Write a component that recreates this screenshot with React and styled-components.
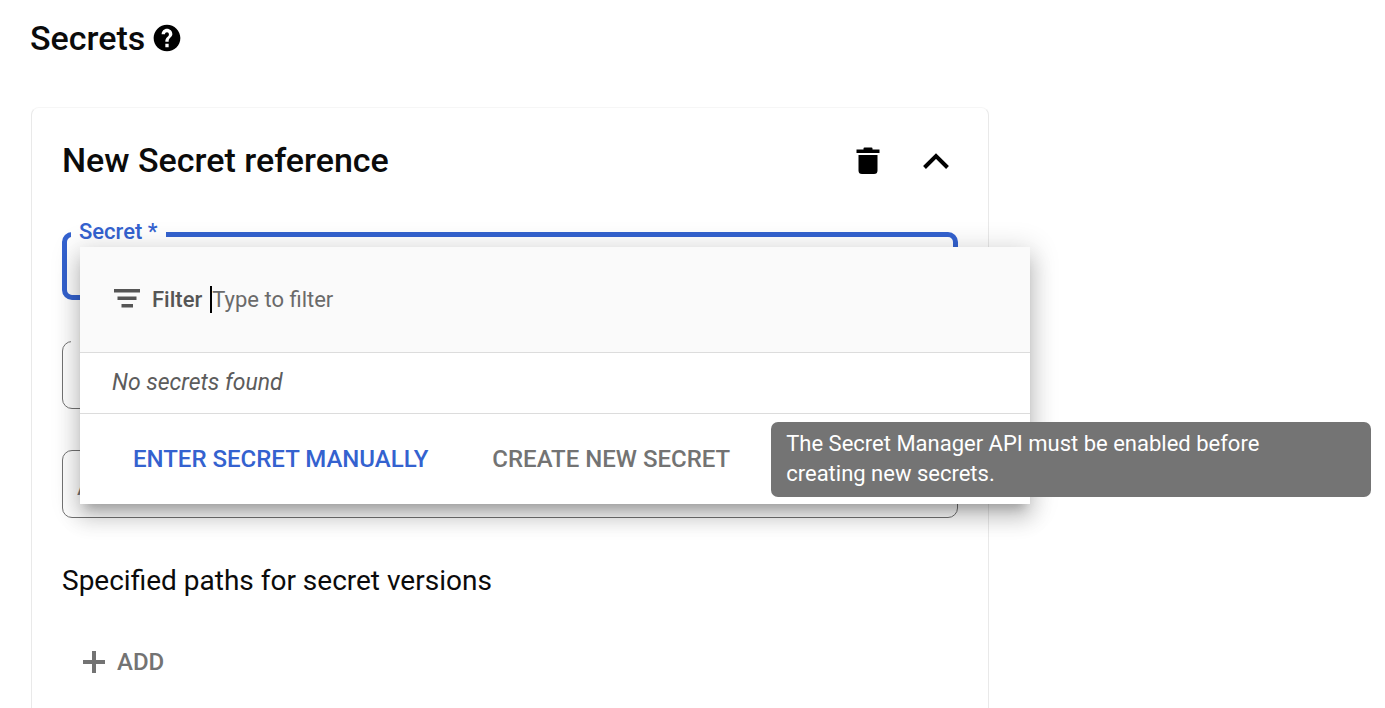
import React from "react";
import styled, { createGlobalStyle } from "styled-components";

const GlobalStyle = createGlobalStyle`
  *, *::before, *::after { box-sizing: border-box; }
  body {
    margin: 0;
    background: #fff;
    color: #0b0b0b;
    font-family: Roboto, "Liberation Sans", sans-serif;
    font-size: 24px;
    overflow-x: hidden;
  }
  button, input, select { font: inherit; }
`;

const BLUE = "#3462cf";
const GREY = "#737373";

const Page = styled.main`
  display: flex;
  flex-direction: column;
  min-height: 100vh;
  padding: 16px 31px 0 30px;
`;

const PageHeader = styled.header`
  display: flex;
  align-items: center;
  gap: 8px;
  height: 44px;
  margin-bottom: 47px;
`;

const Heading = styled.h1`
  margin: 0;
  font-size: 34px;
  line-height: 44px;
  font-weight: 500;
`;

const IconButton = styled.button`
  display: flex;
  padding: 0;
  border: 0;
  background: none;
  color: #000;
  cursor: pointer;
`;

const Card = styled.section`
  flex: 1;
  width: 100%;
  max-width: 958px;
  margin-left: 1px;
  padding: 30px 30px 24px;
  border: 1px solid #e9e9e9;
  border-top-color: #f6f6f6;
  border-bottom: 0;
  border-radius: 8px 8px 0 0;
`;

const CardHeader = styled.div`
  display: flex;
  align-items: center;
  justify-content: space-between;
  height: 44px;
  margin-bottom: 50px;
`;

const CardActions = styled.div`
  display: flex;
  align-items: center;
  gap: 36px;
  padding: 2px 6px 0 0;
`;

const Fields = styled.div`
  display: flex;
  flex-direction: column;
  gap: 41px;
`;

const Field = styled.div`
  position: relative;
  height: 68px;
`;

const FieldLabel = styled.label`
  position: absolute;
  z-index: 1;
  top: -13px;
  left: 9px;
  padding: 0 8px;
  background: #fff;
  color: ${(p) => (p.$active ? BLUE : GREY)};
  font-size: 22px;
  line-height: 26px;
  font-weight: 500;
`;

const control = `
  display: block;
  width: 100%;
  height: 100%;
  margin: 0;
  background: #fff;
  color: #333;
  outline: 0;
  appearance: none;
`;

const Select = styled.select`
  ${control}
  padding: 0 20px;
  border: ${(p) => (p.$active ? `5px solid ${BLUE}` : `1px solid ${GREY}`)};
  border-radius: 10px;
`;

const TextInput = styled.input`
  ${control}
  padding: 6px 14px 0;
  border: 1px solid ${GREY};
  border-radius: 10px;
  &::placeholder { color: ${GREY}; opacity: 1; }
`;

const Menu = styled.div`
  position: absolute;
  z-index: 2;
  top: 15px;
  left: 18px;
  right: -72px;
  background: #fff;
  box-shadow:
    0 10px 10px -6px rgba(0, 0, 0, 0.2),
    0 14px 20px 2px rgba(0, 0, 0, 0.14),
    0 4px 26px 4px rgba(0, 0, 0, 0.14);
`;

const FilterRow = styled.div`
  display: flex;
  align-items: center;
  height: 106px;
  padding: 0 32px;
  border-bottom: 1px solid #dcdcdc;
  background: #fafafa;
  color: #555;
`;

const FilterLabel = styled.label`
  margin-left: 10px;
  font-size: 22px;
  font-weight: 500;
`;

const Caret = styled.span`
  width: 2px;
  height: 27px;
  margin-left: 8px;
  background: #000;
`;

const FilterInput = styled.input`
  flex: 1;
  min-width: 0;
  padding: 0;
  border: 0;
  outline: 0;
  background: transparent;
  font-size: 22px;
  &::placeholder { color: #6a6a6a; opacity: 1; }
`;

const EmptyRow = styled.p`
  height: 61px;
  margin: 0;
  padding: 0 32px;
  border-bottom: 1px solid #dcdcdc;
  color: #5c5c5c;
  font-size: 23px;
  line-height: 60px;
  font-style: italic;
`;

const MenuFooter = styled.div`
  display: flex;
  align-items: center;
  gap: 32px;
  height: 90px;
  padding: 0 37px;
`;

const TextButton = styled.button`
  display: flex;
  align-items: center;
  height: 48px;
  padding: 0 16px;
  border: 0;
  background: none;
  color: ${(p) => (p.$primary ? BLUE : GREY)};
  font-size: 24px;
  font-weight: 500;
  white-space: nowrap;
  cursor: pointer;
`;

const AddButton = styled(TextButton)`
  gap: 11px;
  padding: 0 20px;
`;

const TooltipAnchor = styled.div`
  position: relative;
`;

const Tooltip = styled.div`
  position: absolute;
  top: -13px;
  left: calc(100% + 25px);
  width: 600px;
  padding: 7px 60px 8px 15px;
  border-radius: 7px;
  background: #747474;
  color: #fff;
  font-size: 22px;
  line-height: 30px;
`;

const Subheading = styled.h3`
  margin: 45px 0 39px;
  font-size: 28px;
  line-height: 36px;
  font-weight: 400;
`;

const HelpIcon = () => (
  <svg width="28" height="28" viewBox="1 1 22 22" fill="currentColor" aria-hidden="true">
    <path d="M12 1.500C6.200 1.500 1.500 6.200 1.500 12S6.200 22.500 12 22.500 22.500 17.800 22.500 12 17.800 1.500 12 1.500zm1.300 17.700h-2.600v-2.600h2.600v2.600zm1.770-7.950-.9.920C13.450 12.900 13.300 13.500 13.300 15h-2.600v-.5c0-1.100.45-2.100 1.170-2.830l1.240-1.260c.37-.36.390-.860.390-1.410 0-.9-.6-1.600-1.500-1.600s-1.600.7-1.600 1.600H7.800c0-2.210 1.890-4.200 4.200-4.200s4.200 1.890 4.200 4.200c0 .88-.56 1.680-1.130 2.250z" />
  </svg>
);

const TrashIcon = () => (
  <svg width="32" height="32" viewBox="0 0 32 32" fill="currentColor" aria-hidden="true">
    <path d="M4.500 4.500H11.500V3.500a1 1 0 0 1 1-1h7a1 1 0 0 1 1 1V4.500H27.500V8h-23z" />
    <path d="M6.500 10h19v15.500a3.500 3.500 0 0 1-3.500 3.500h-12a3.500 3.500 0 0 1-3.500-3.500z" />
  </svg>
);

const ChevronUpIcon = () => (
  <svg width="32" height="32" viewBox="0 0 32 32" fill="none" stroke="currentColor" strokeWidth="4" aria-hidden="true">
    <path d="M4.500 22.500 16 11 27.500 22.500" />
  </svg>
);

const FilterIcon = () => (
  <svg width="30" height="24" viewBox="0 0 30 24" fill="currentColor" aria-hidden="true">
    <path d="M2 1h26v3.500H2zM5.500 8.500h19V12h-19zM9.500 16h11.500v3.500H9.500z" />
  </svg>
);

const PlusIcon = () => (
  <svg width="24" height="24" viewBox="0 0 24 24" fill="none" stroke="currentColor" strokeWidth="4" aria-hidden="true">
    <path d="M12 1v22M1 12h22" />
  </svg>
);

export default function App() {
  return (
    <>
      <GlobalStyle />
      <Page>
        <PageHeader>
          <Heading>Secrets</Heading>
          <IconButton type="button" aria-label="Help">
            <HelpIcon />
          </IconButton>
        </PageHeader>
        <Card>
          <CardHeader>
            <Heading as="h2">New Secret reference</Heading>
            <CardActions>
              <IconButton type="button" aria-label="Delete secret reference">
                <TrashIcon />
              </IconButton>
              <IconButton type="button" aria-label="Collapse">
                <ChevronUpIcon />
              </IconButton>
            </CardActions>
          </CardHeader>
          <Fields>
            <Field>
              <FieldLabel htmlFor="secret" $active>Secret *</FieldLabel>
              <Select id="secret" $active />
              <Menu>
                <FilterRow>
                  <FilterIcon />
                  <FilterLabel htmlFor="filter">Filter</FilterLabel>
                  <Caret />
                  <FilterInput id="filter" type="text" placeholder="Type to filter" />
                </FilterRow>
                <EmptyRow>No secrets found</EmptyRow>
                <MenuFooter>
                  <TextButton type="button" $primary>ENTER SECRET MANUALLY</TextButton>
                  <TooltipAnchor>
                    <TextButton type="button" aria-describedby="api-tip">CREATE NEW SECRET</TextButton>
                    <Tooltip id="api-tip" role="tooltip">
                      The Secret Manager API must be enabled before creating new secrets.
                    </Tooltip>
                  </TooltipAnchor>
                </MenuFooter>
              </Menu>
            </Field>
            <Field>
              <FieldLabel htmlFor="method">Method</FieldLabel>
              <Select id="method" />
            </Field>
            <Field>
              <TextInput type="text" aria-label="Path" placeholder="A" />
            </Field>
          </Fields>
          <Subheading>Specified paths for secret versions</Subheading>
          <AddButton type="button">
            <PlusIcon />
            ADD
          </AddButton>
        </Card>
      </Page>
    </>
  );
}
